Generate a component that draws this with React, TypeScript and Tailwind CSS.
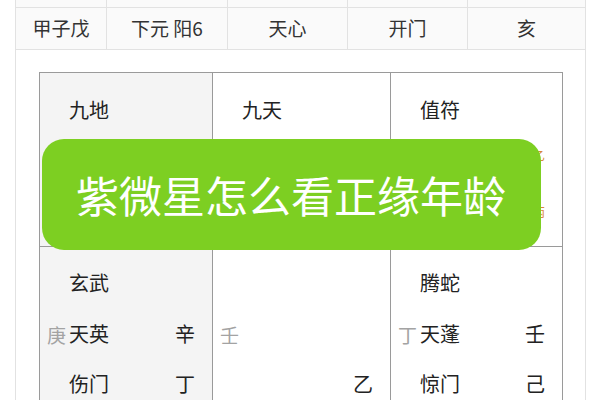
import React from "react";

const font = { fontFamily: '"Noto Sans CJK SC", "Noto Sans", sans-serif' };

function Line({ left, main, right, mt }: { left?: string; main?: string; right?: string; mt?: string }) {
  return (
    <div className={`flex items-center h-[30px] ${mt ?? ""}`}>
      <span className="w-[29px] shrink-0 pl-[7px] text-[#a3a3a3] text-[19px] leading-none">{left ?? ""}</span>
      <span className="text-[#222] text-[20px] leading-none">{main ?? ""}</span>
      <span className="ml-auto pr-[17px] text-[#222] text-[20px] leading-none">{right ?? ""}</span>
    </div>
  );
}

export default function App() {
  const cols = "grid grid-cols-[91px_121px_120px_120px_1fr]";
  const headers = ["甲子戊", "下元 阳6", "天心", "开门", "亥"];
  return (
    <div className="w-[600px] h-[400px] overflow-hidden bg-white relative" style={font}>
      <div className="mx-[15px] h-full border-x border-[#e2e2e2] w-[571px]">
        <div className={`${cols} h-[8px] border-b border-[#e2e2e2] bg-[#fafafa]`}>
          {headers.map((_, i) => (
            <div key={i} className={i < 4 ? "border-r border-[#e2e2e2]" : ""} />
          ))}
        </div>
        <div className={`${cols} h-[42px] border-b border-[#e2e2e2] bg-[#fafafa]`}>
          {headers.map((h, i) => (
            <div
              key={i}
              className={`flex items-center justify-center text-[19px] text-[#333] ${i < 4 ? "border-r border-[#e2e2e2]" : ""}`}
            >
              {h}
            </div>
          ))}
        </div>
        <div className="pt-[22px] pl-[23px] pr-[22px]">
          <div className="grid grid-cols-[173px_178px_1fr] grid-rows-[174px_200px] border-l border-t border-r border-[#9a9a9a]">
            <div className="bg-[#f4f4f4] border-r border-b border-[#9a9a9a] pt-[22px]">
              <Line main="九地" />
            </div>
            <div className="border-r border-b border-[#9a9a9a] pt-[22px]">
              <Line main="九天" />
            </div>
            <div className="border-b border-[#9a9a9a] pt-[22px] relative">
              <Line main="值符" />
              <div className="absolute right-[17px] top-[76px] text-[12px] text-[#d9883a] leading-[14px]">乙</div>
              <div className="absolute right-[17px] top-[132px] text-[12px] text-[#d9883a] leading-[14px]">丙</div>
            </div>
            <div className="bg-[#f4f4f4] border-r border-[#9a9a9a] pt-[21px]">
              <Line main="玄武" />
              <Line left="庚" main="天英" right="辛" mt="mt-[21px]" />
              <Line main="伤门" right="丁" mt="mt-[20px]" />
            </div>
            <div className="border-r border-[#9a9a9a] pt-[21px]">
              <Line />
              <Line left="壬" mt="mt-[21px]" />
              <Line right="乙" mt="mt-[20px]" />
            </div>
            <div className="pt-[21px]">
              <Line main="腾蛇" />
              <Line left="丁" main="天蓬" right="壬" mt="mt-[21px]" />
              <Line main="惊门" right="己" mt="mt-[20px]" />
            </div>
          </div>
        </div>
      </div>
      <div className="absolute left-[42px] top-[139px] w-[499px] h-[111px] rounded-[22px] bg-[#7dcf22] flex items-center pl-[34px]">
        <span className="text-white text-[43px] leading-none">紫微星怎么看正缘年龄</span>
      </div>
    </div>
  );
}
